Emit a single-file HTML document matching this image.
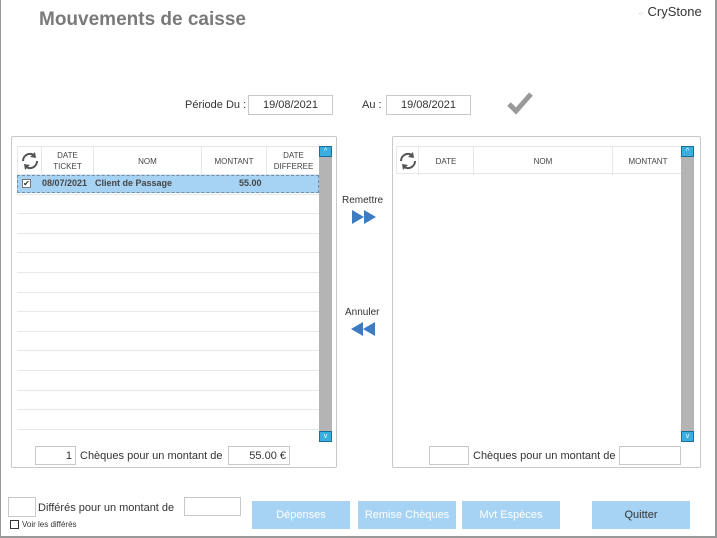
<!DOCTYPE html>
<html><head><meta charset="utf-8"><style>
*{margin:0;padding:0;box-sizing:border-box}
body{width:717px;height:538px;overflow:hidden;background:#fff;font-family:"Liberation Sans",sans-serif;color:#333;position:relative}
.a{position:absolute}
.box{position:absolute;border:1px solid #c8c8c8;background:#fff}
.inp{position:absolute;border:1px solid #c8c8c8;background:#fff;font-size:11px;line-height:18px;color:#333}
.t{position:absolute;font-size:11px;color:#333;white-space:nowrap}
.hd{position:absolute;top:0;height:28px;border-right:1px solid #e6e6e6;font-size:8px;color:#444;display:flex;align-items:center;justify-content:center;text-align:center;line-height:11px}
.rl{position:absolute;height:1px;background:#e8e8e8}
.sb{position:absolute;width:13px;background:#b4b4b4}
.sa{position:absolute;left:0;width:13px;height:11px;background:#3aaee0;border:1px solid #1a6f99;color:#fff;font-size:7px;line-height:9px;text-align:center}
.btn{position:absolute;top:501px;height:28px;background:#a6d3f4;color:#fff;font-size:11px;display:flex;align-items:center;justify-content:center}
</style></head><body>
<div class="a" style="left:0;top:0;width:1px;height:538px;background:#999"></div>
<div class="a" style="right:0;top:0;width:2px;height:538px;background:#999"></div>
<div class="a" style="left:0;bottom:0;width:717px;height:2px;background:#999"></div>

<div class="t" style="left:39px;top:9px;font-size:19px;font-weight:bold;color:#7a7a7a">Mouvements de caisse</div>
<div class="t" style="left:638px;top:4px;font-size:13px;color:#333"><span style="font-size:7px;color:#9ab">⁘</span> CryStone</div>

<div class="t" style="left:185px;top:99px">Période Du :</div>
<div class="inp" style="left:248px;top:95px;width:85px;height:20px;text-align:center">19/08/2021</div>
<div class="t" style="left:362px;top:99px">Au :</div>
<div class="inp" style="left:386px;top:95px;width:85px;height:20px;text-align:center">19/08/2021</div>
<svg class="a" style="left:507px;top:91px" width="26" height="24" viewBox="0 0 26 24"><path d="M2 13 L9 20 L24 3" stroke="#999" stroke-width="5" fill="none"/></svg>

<!-- left panel -->
<div class="box" style="left:11px;top:136px;width:326px;height:332px;border-radius:2px"></div>
<div class="a" style="left:17px;top:146px;width:302px;height:29px;border:1px solid #e6e6e6;border-right:none">
 <div class="hd" style="left:0;width:24px"><svg width="20" height="18" viewBox="0 0 20 18"><path d="M3 9 A7 7 0 0 1 15 4" stroke="#555" stroke-width="2" fill="none"/><path d="M15 0 L16 6 L10 5Z" fill="#555"/><path d="M17 9 A7 7 0 0 1 5 14" stroke="#555" stroke-width="2" fill="none"/><path d="M5 18 L4 12 L10 13Z" fill="#555"/></svg></div>
 <div class="hd" style="left:24px;width:52px">DATE<br>TICKET</div>
 <div class="hd" style="left:76px;width:108px">NOM</div>
 <div class="hd" style="left:184px;width:65px">MONTANT</div>
 <div class="hd" style="left:249px;width:53px;border-right:none">DATE<br>DIFFEREE</div>
</div>
<div class="a" style="left:17px;top:175px;width:302px;height:18px;background:#a6d3f4;border:1px dashed #6a8fb0"></div>
<div class="a" style="left:22px;top:179px;width:9px;height:9px;background:#fff;border:1px solid #777;font-size:8px;line-height:7px;text-align:center">✔</div>
<div class="t" style="left:42px;top:178px;font-size:9px;font-weight:bold;color:#444">08/07/2021</div>
<div class="t" style="left:95px;top:178px;font-size:9px;font-weight:bold;color:#444">Client de Passage</div>
<div class="t" style="left:239px;top:178px;font-size:9px;font-weight:bold;color:#444">55.00</div>
<div id="rowsL"></div>
<div class="sb" style="left:319px;top:146px;height:296px"><div class="sa" style="top:0">^</div><div class="sa" style="bottom:0">v</div></div>
<div class="inp" style="left:35px;top:446px;width:41px;height:19px;text-align:right;padding-right:3px">1</div>
<div class="t" style="left:80px;top:450px">Chèques pour un montant de</div>
<div class="inp" style="left:228px;top:446px;width:62px;height:19px;text-align:right;padding-right:3px">55.00 €</div>

<!-- middle -->
<div class="t" style="left:342px;top:195px;font-size:10px">Remettre</div>
<svg class="a" style="left:352px;top:210px" width="24" height="14"><path d="M0 0 L12 7 L0 14Z M12 0 L24 7 L12 14Z" fill="#3d7cc0"/></svg>
<div class="t" style="left:345px;top:307px;font-size:10px">Annuler</div>
<svg class="a" style="left:351px;top:322px" width="24" height="14"><path d="M12 0 L0 7 L12 14Z M24 0 L12 7 L24 14Z" fill="#3d7cc0"/></svg>

<!-- right panel -->
<div class="box" style="left:392px;top:136px;width:309px;height:332px;border-radius:2px"></div>
<div class="a" style="left:396px;top:146px;width:286px;height:28px;border:1px solid #e6e6e6;border-right:none">
 <div class="hd" style="left:0;width:22px"><svg width="20" height="18" viewBox="0 0 20 18"><path d="M3 9 A7 7 0 0 1 15 4" stroke="#555" stroke-width="2" fill="none"/><path d="M15 0 L16 6 L10 5Z" fill="#555"/><path d="M17 9 A7 7 0 0 1 5 14" stroke="#555" stroke-width="2" fill="none"/><path d="M5 18 L4 12 L10 13Z" fill="#555"/></svg></div>
 <div class="hd" style="left:22px;width:55px">DATE</div>
 <div class="hd" style="left:77px;width:139px">NOM</div>
 <div class="hd" style="left:216px;width:70px;border-right:none">MONTANT</div>
</div>
<div class="sb" style="left:681px;top:146px;height:296px"><div class="sa" style="top:0">^</div><div class="sa" style="bottom:0">v</div></div>
<div class="inp" style="left:429px;top:446px;width:40px;height:19px"></div>
<div class="t" style="left:473px;top:450px">Chèques pour un montant de</div>
<div class="inp" style="left:619px;top:446px;width:62px;height:19px"></div>

<!-- bottom -->
<div class="inp" style="left:8px;top:497px;width:28px;height:20px"></div>
<div class="t" style="left:38px;top:502px">Différés pour un montant de</div>
<div class="inp" style="left:184px;top:497px;width:57px;height:19px"></div>
<div class="a" style="left:10px;top:520px;width:9px;height:9px;border:1px solid #333"></div>
<div class="t" style="left:22px;top:520px;font-size:8px">Voir les différés</div>
<div class="btn" style="left:252px;width:98px">Dépenses</div>
<div class="btn" style="left:358px;width:98px">Remise Chèques</div>
<div class="btn" style="left:462px;width:98px">Mvt Espèces</div>
<div class="btn" style="left:592px;width:98px;color:#333">Quitter</div>

<script>
var h='';
for(var i=1;i<=13;i++){var y=Math.round(174+19.6*i);
h+='<div class="rl" style="left:17px;top:'+y+'px;width:302px"></div>';
h+='<div class="rl" style="left:396px;top:'+y+'px;width:285px"></div>';}
document.getElementById('rowsL').innerHTML=h;
</script>
</body></html>
